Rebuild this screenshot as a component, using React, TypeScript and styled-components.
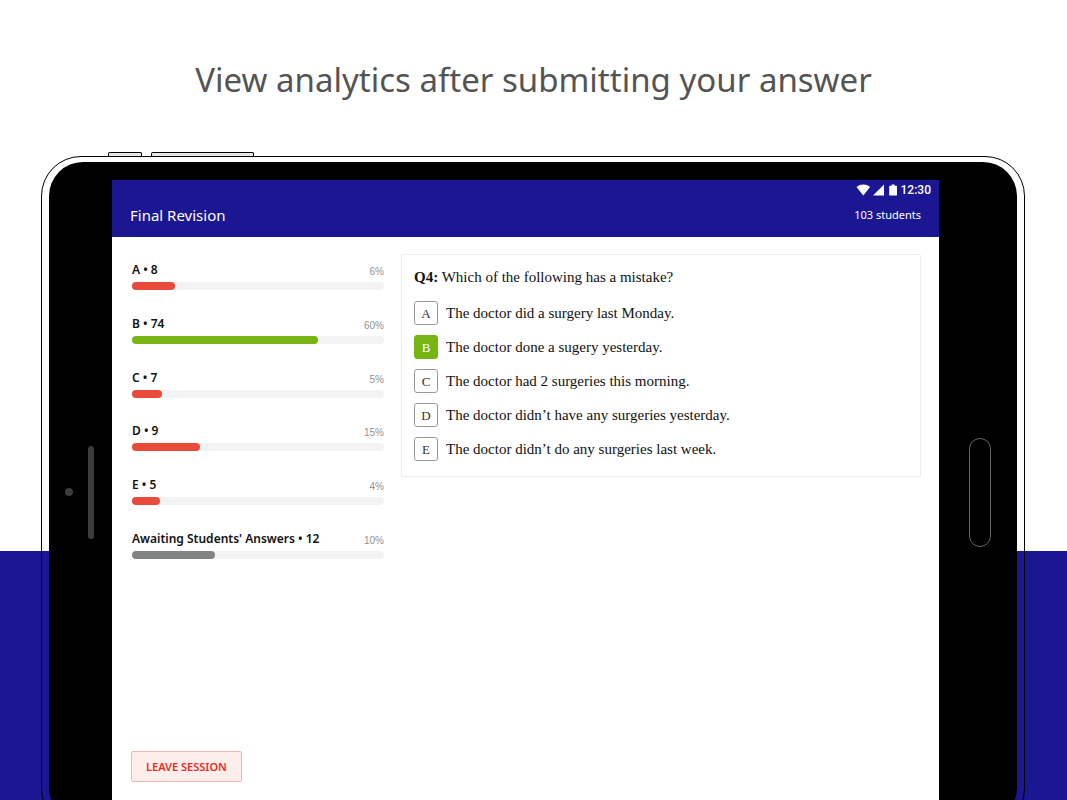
import React from "react";
import styled, { createGlobalStyle } from "styled-components";

const navy = "#1b1691";
const green = "#76b512";
const red = "#e94b3a";
const grey = "#828483";
const sans = '"Noto Sans", sans-serif';
const serif = '"Liberation Serif", serif';

const GlobalStyle = createGlobalStyle`
  *, *::before, *::after { box-sizing: border-box; }
  body { margin: 0; background: #fff; font-family: ${sans}; }
`;

const Stage = styled.main`
  display: flex;
  flex-direction: column;
  height: 100vh;
  overflow: hidden;
  background: linear-gradient(#fff calc(100% - 249px), ${navy} calc(100% - 249px));
`;

const Headline = styled.h1`
  margin: 0;
  padding: 56px 16px 48px;
  font-size: 33px;
  line-height: 48px;
  font-weight: 400;
  text-align: center;
  color: #545454;
`;

const Tablet = styled.div`
  flex: 1;
  display: flex;
  flex-direction: column;
  margin: 0 42px -29px 41px;
`;

const SideKeys = styled.div`
  display: flex;
  gap: 9px;
  padding-left: 67px;
`;

const SideKey = styled.span<{ $length: number }>`
  width: ${(p) => p.$length}px;
  height: 4px;
  border: 1px solid #000;
  border-bottom: 0;
  border-radius: 2px 2px 0 0;
  background: #e4e8e4;
`;

const Shell = styled.div`
  flex: 1;
  display: flex;
  padding: 5px 7px 6px;
  border: 1px solid #000;
  border-radius: 40px;
`;

const Bezel = styled.div`
  flex: 1;
  display: grid;
  grid-template-columns: 63px 1fr 78px;
  align-items: center;
  padding: 18px 0;
  border-radius: 34px;
  background: #000;
`;

const BezelSide = styled.div`
  display: flex;
  align-items: center;
  justify-content: center;
  gap: 15px;
`;

const SensorSide = styled(BezelSide)`
  padding-right: 2px;
`;

const HomeSide = styled(BezelSide)`
  padding-left: 4px;
`;

const Camera = styled.span`
  width: 8px;
  height: 8px;
  border-radius: 50%;
  background: #3d3d3d;
`;

const Speaker = styled.span`
  width: 6px;
  height: 93px;
  border-radius: 3px;
  background: #3d3d3d;
`;

const HomeKey = styled.span`
  width: 22px;
  height: 109px;
  border: 1px solid #666;
  border-radius: 11px;
`;

const Screen = styled.div`
  align-self: stretch;
  display: flex;
  flex-direction: column;
  background: #fff;
`;

const AppBar = styled.header`
  background: ${navy};
  color: #fff;
  height: 57px;
`;

const StatusBar = styled.div`
  display: flex;
  justify-content: flex-end;
  align-items: center;
  gap: 4px;
  height: 20px;
  padding-right: 8px;
  font: 500 12px/20px Roboto, sans-serif;
`;

const TitleRow = styled.div`
  display: flex;
  justify-content: space-between;
  align-items: center;
  padding: 4px 18px;
`;

const Title = styled.h2`
  margin: 0;
  font-size: 15px;
  line-height: 20px;
  font-weight: 400;
`;

const Students = styled.span`
  font-size: 11px;
  line-height: 22px;
`;

const Content = styled.div`
  flex: 1;
  display: grid;
  grid-template-columns: minmax(0, 252px) minmax(0, 1fr);
  column-gap: 17px;
  align-items: start;
  padding: 17px 18px 22px 20px;
`;

const Panel = styled.aside`
  align-self: stretch;
  display: flex;
  flex-direction: column;
  justify-content: space-between;
  align-items: flex-start;
`;

const Results = styled.ul`
  display: flex;
  flex-direction: column;
  justify-content: space-between;
  width: 100%;
  height: 305px;
  margin: 0;
  padding: 7px 0 0;
  list-style: none;
`;

const ResultHead = styled.div`
  display: flex;
  justify-content: space-between;
  height: 21px;
`;

const ResultLabel = styled.span`
  font-size: 12px;
  line-height: 18px;
  font-weight: 600;
  color: #111;
`;

const ResultShare = styled.span`
  font: 10px/22px "Liberation Sans", sans-serif;
  color: #929292;
`;

const Track = styled.div`
  height: 8px;
  border-radius: 4px;
  background: #f3f3f3;
`;

const Fill = styled.div<{ $color: string }>`
  height: 100%;
  border-radius: 4px;
  background: ${(p) => p.$color};
`;

const LeaveButton = styled.button`
  height: 31px;
  margin-left: -1px;
  padding: 0 14px;
  border: 1px solid #f3b5ae;
  border-radius: 2px;
  background: #fdeeec;
  color: #e5301f;
  font: 600 11px/16px ${sans};
`;

const Card = styled.section`
  padding: 12px 12px 15px;
  border: 1px solid #ededed;
  border-radius: 2px;
  font-family: ${serif};
  color: #111;
`;

const Question = styled.h3`
  margin: 0 0 14px;
  font-size: 15px;
  line-height: 20px;
  font-weight: 400;
`;

const Choices = styled.ol`
  display: grid;
  gap: 10px;
  margin: 0;
  padding: 0;
  list-style: none;
`;

const Choice = styled.li`
  display: flex;
  align-items: center;
  gap: 8px;
  font-size: 15px;
  line-height: 24px;
`;

const Letter = styled.span<{ $picked: boolean }>`
  flex: none;
  width: 24px;
  height: 24px;
  border: 1px solid ${(p) => (p.$picked ? green : "#999")};
  border-radius: 3px;
  background: ${(p) => (p.$picked ? green : "#fff")};
  color: ${(p) => (p.$picked ? "#fff" : "#333")};
  font-size: 13px;
  line-height: 23px;
  text-align: center;
`;

const results = [
  { name: "A", count: 8, share: "6%", fill: 17, color: red },
  { name: "B", count: 74, share: "60%", fill: 74, color: green },
  { name: "C", count: 7, share: "5%", fill: 12, color: red },
  { name: "D", count: 9, share: "15%", fill: 27, color: red },
  { name: "E", count: 5, share: "4%", fill: 11, color: red },
  { name: "Awaiting Students' Answers", count: 12, share: "10%", fill: 33, color: grey },
];

const choices = [
  { letter: "A", text: "The doctor did a surgery last Monday." },
  { letter: "B", text: "The doctor done a sugery yesterday.", picked: true },
  { letter: "C", text: "The doctor had 2 surgeries this morning." },
  { letter: "D", text: "The doctor didn’t have any surgeries yesterday." },
  { letter: "E", text: "The doctor didn’t do any surgeries last week." },
];

const StatusIcons = () => (
  <svg width="41" height="12" viewBox="0 0 41 12" fill="#fff" aria-hidden="true">
    <path d="M.5 2.9C2.4 1.2 4.7.4 7.3.4s4.9.8 6.8 2.5L7.3 11.4z" />
    <path d="M28 .5v10.9H17z" />
    <path d="M33.8 1.7h1.8V.5h3v1.2h1.8q.6 0 .6.6v8.5q0 .6-.6.6h-6.6q-.6 0-.6-.6V2.3q0-.6.6-.6z" />
  </svg>
);

export default function App() {
  return (
    <>
      <GlobalStyle />
      <Stage>
        <Headline>View analytics after submitting your answer</Headline>
        <Tablet>
          <SideKeys>
            <SideKey $length={34} />
            <SideKey $length={103} />
          </SideKeys>
          <Shell>
            <Bezel>
              <SensorSide>
                <Camera />
                <Speaker />
              </SensorSide>
              <Screen>
                <AppBar>
                  <StatusBar>
                    <StatusIcons />
                    <time>12:30</time>
                  </StatusBar>
                  <TitleRow>
                    <Title>Final Revision</Title>
                    <Students>103 students</Students>
                  </TitleRow>
                </AppBar>
                <Content>
                  <Panel>
                    <Results>
                      {results.map((r) => (
                        <li key={r.name}>
                          <ResultHead>
                            <ResultLabel>{`${r.name} • ${r.count}`}</ResultLabel>
                            <ResultShare>{r.share}</ResultShare>
                          </ResultHead>
                          <Track>
                            <Fill $color={r.color} style={{ width: `${r.fill}%` }} />
                          </Track>
                        </li>
                      ))}
                    </Results>
                    <LeaveButton type="button">LEAVE SESSION</LeaveButton>
                  </Panel>
                  <Card>
                    <Question>
                      <b>Q4:</b> Which of the following has a mistake?
                    </Question>
                    <Choices>
                      {choices.map((c) => (
                        <Choice key={c.letter}>
                          <Letter $picked={!!c.picked}>{c.letter}</Letter>
                          {c.text}
                        </Choice>
                      ))}
                    </Choices>
                  </Card>
                </Content>
              </Screen>
              <HomeSide>
                <HomeKey />
              </HomeSide>
            </Bezel>
          </Shell>
        </Tablet>
      </Stage>
    </>
  );
}
